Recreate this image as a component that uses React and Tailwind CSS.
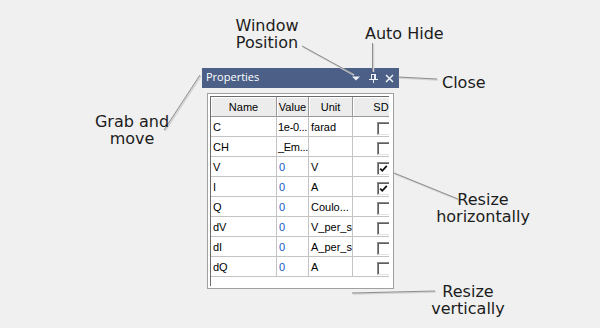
import React from 'react';

const rows = [
    { name: 'C', value: '1e-0...', unit: 'farad', sd: false, num: false },
    { name: 'CH', value: '_Em...', unit: '', sd: false, num: false },
    { name: 'V', value: '0', unit: 'V', sd: true, num: true },
    { name: 'I', value: '0', unit: 'A', sd: true, num: true },
    { name: 'Q', value: '0', unit: 'Coulo...', sd: false, num: true },
    { name: 'dV', value: '0', unit: 'V_per_s', sd: false, num: true },
    { name: 'dI', value: '0', unit: 'A_per_s', sd: false, num: true },
    { name: 'dQ', value: '0', unit: 'A', sd: false, num: true },
];

// leader lines from each label to the part of the panel it explains
const leaders = [
    [302, 46, 353, 74],
    [372.5, 43, 372.5, 71],
    [398, 77, 437, 79],
    [200, 75, 164, 130],
    [394, 173, 458, 199],
    [352, 293, 435, 291],
];

const Check = ({ on }) => (
    <div className="mt-[5px] ml-[24px] h-[13px] w-[13px] shrink-0 border border-t-[#8a8a8a] border-l-[#8a8a8a] border-r-[#e2e2e2] border-b-[#e2e2e2] bg-white shadow-[inset_1px_1px_0_#5e5e5e]">
        {on && (
            <svg width="11" height="11" viewBox="0 0 11 11" className="block">
                <path d="M2.2 5.6 L4.3 7.8 L8.8 2.9" fill="none" stroke="#111" strokeWidth="1.8" />
            </svg>
        )}
    </div>
);

const Label = ({ className, children }) => (
    <div className={`absolute text-[16px] leading-[17px] text-[#1c1c1c] font-['DejaVu_Sans',sans-serif] ${className}`}>
        {children}
    </div>
);

const App = () => {
    const cell = "h-full shrink-0 border-r border-[#c4c4c4] pl-[2px] pt-px leading-[19px] whitespace-nowrap overflow-hidden";
    const head = "h-full shrink-0 border-r border-[#9a9a9a] pt-px leading-[19px] text-center bg-[#ececec] shadow-[inset_1px_1px_0_#ffffff]";

    return (
        <div className="relative w-[600px] h-[328px] overflow-hidden bg-[#f0f0f0]">
            {/* the docked panel */}
            <div className="absolute left-[202px] top-[68px] w-[197px] flex flex-col">
                <div className="h-[20px] flex items-center bg-[#4b5f87] pl-[4px] pr-[5px]">
                    <span className="-mt-[2px] text-[11px] text-white font-['Open_Sans',sans-serif]">Properties</span>
                    <svg width="9" height="9" viewBox="0 0 9 9" className="ml-auto">
                        <polygon points="0,2.5 8,2.5 4,6.5" fill="#eef1f6" />
                    </svg>
                    <svg width="9" height="9" viewBox="0 0 9 9" className="ml-[8px]">
                        <rect x="2.5" y="0.5" width="4" height="5" fill="none" stroke="#eef1f6" />
                        <line x1="5.5" y1="1" x2="5.5" y2="5" stroke="#eef1f6" />
                        <line x1="0" y1="5.5" x2="9" y2="5.5" stroke="#eef1f6" />
                        <line x1="4.5" y1="6" x2="4.5" y2="9" stroke="#eef1f6" />
                    </svg>
                    <svg width="9" height="9" viewBox="0 0 9 9" className="ml-[7px]">
                        <path d="M1 1 L8 8 M8 1 L1 8" stroke="#eef1f6" strokeWidth="1.5" />
                    </svg>
                </div>
                <div className="bg-[#f0f0f0] px-[5px] pt-[5px] pb-[3px]">
                    <div className="h-[196px] border border-[#a0a0a0] bg-white pl-[2px] pr-[4px] py-[2px]">
                        <div className="h-full overflow-hidden border-l border-t border-[#6b6b6b] text-[11px] text-black font-['Liberation_Sans',Arial,sans-serif]">
                            <div className="flex w-max h-[20px] border-b border-[#9a9a9a]">
                                <div className={`${head} w-[66px]`}>Name</div>
                                <div className={`${head} w-[32px]`}>Value</div>
                                <div className={`${head} w-[44px]`}>Unit</div>
                                <div className={`${head} w-[56px] pl-[1px]`}>SD</div>
                            </div>
                            {rows.map((r) => (
                                <div key={r.name} className="flex w-max h-[20px] border-b border-[#c4c4c4]">
                                    <div className={`${cell} w-[66px]`}>{r.name}</div>
                                    <div className={`${cell} w-[32px] ${r.num ? 'text-[#1558c8]' : '!pl-[1px] tracking-[-0.3px]'}`}>{r.value}</div>
                                    <div className={`${cell} w-[44px]`}>{r.unit}</div>
                                    <div className="h-full w-[56px] shrink-0 flex items-start">
                                        <Check on={r.sd} />
                                    </div>
                                </div>
                            ))}
                        </div>
                    </div>
                </div>
            </div>

            <svg width="600" height="328" className="absolute left-0 top-0 pointer-events-none">
                {leaders.map(([x1, y1, x2, y2], i) => (
                    <g key={i}>
                        <line x1={x1 + 1} y1={y1 + 1} x2={x2 + 1} y2={y2 + 1} stroke="#d2d2d2" strokeWidth="1.5" />
                        <line x1={x1} y1={y1} x2={x2} y2={y2} stroke="#8e8e8e" strokeWidth="1" />
                    </g>
                ))}
            </svg>

            <Label className="left-[217px] top-[17px] w-[100px] text-center">Window<br />Position</Label>
            <Label className="left-[365px] top-[25px]">Auto Hide</Label>
            <Label className="left-[442px] top-[74px]">Close</Label>
            <Label className="left-[82px] top-[113px] w-[100px] text-center">Grab and<br />move</Label>
            <Label className="left-[433px] top-[191px] w-[100px] text-center">Resize<br />horizontally</Label>
            <Label className="left-[418px] top-[283px] w-[100px] text-center">Resize<br />vertically</Label>
        </div>
    );
};

export default App;
